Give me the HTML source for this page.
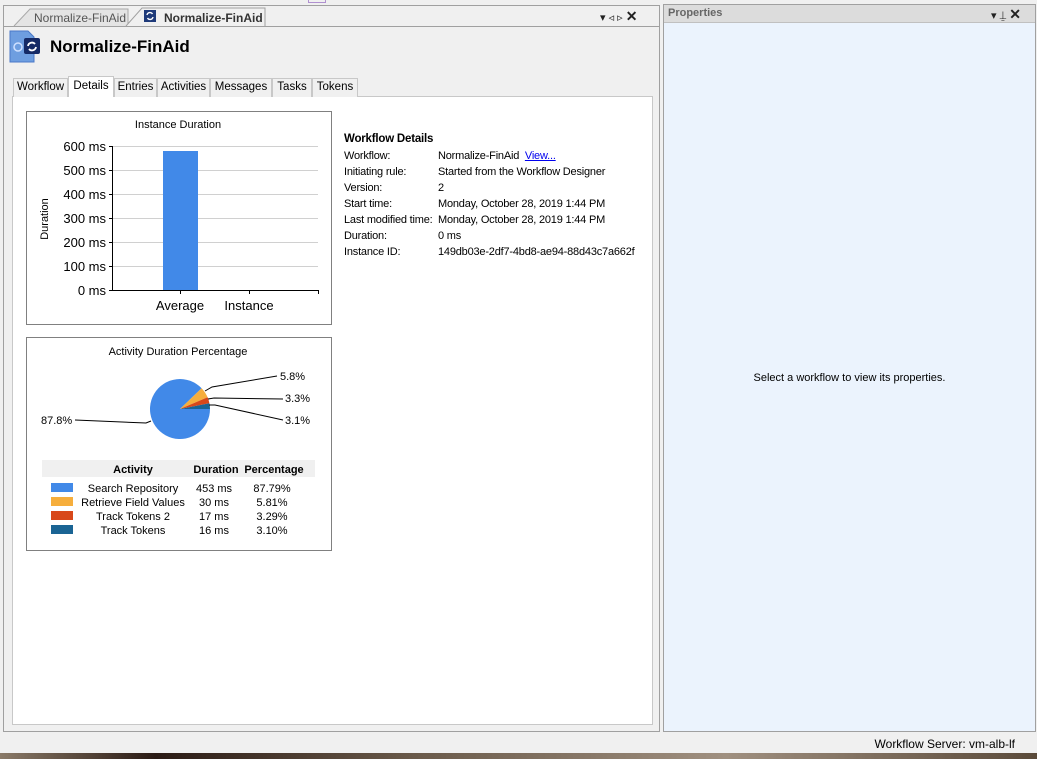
<!DOCTYPE html>
<html><head><meta charset="utf-8"><style>
*{margin:0;padding:0;box-sizing:border-box}
body{width:1037px;height:759px;overflow:hidden;background:#f0f0f0;font-family:"Liberation Sans",Arial,sans-serif;font-size:11px;color:#000;position:relative}
.a{position:absolute;white-space:nowrap}
.tab{position:absolute;top:78px;height:19px;border:1px solid #c8c8c8;border-bottom:none;background:#f0f0f0;font-size:11.5px;text-align:center;line-height:17px}
.lbl{position:absolute;left:344px;font-size:11px;letter-spacing:-0.2px}
.val{position:absolute;left:438px;font-size:11px;letter-spacing:-0.2px;white-space:nowrap}
</style></head><body>
<div class="a" style="left:3px;top:5px;width:657px;height:727px;border:1px solid #a0a0a0;background:#f0f0f0"></div>
<div class="a" style="left:4px;top:26px;width:655px;height:1px;background:#a0a0a0"></div>
<svg class="a" style="left:0;top:0" width="300" height="28">
<path d="M14 26 L30 9 L128 9 L128 26" fill="#e4e4e4" stroke="#a8a8a8"/>
<path d="M126 26 L142 8 L265 8 L265 26" fill="#f0f0f0" stroke="#a0a0a0"/>
<rect x="144" y="10" width="12" height="12" fill="#1e3a7a"/>
<path d="M147 15 a3 3 0 0 1 5.5 -1 M153 17 a3 3 0 0 1 -5.5 1" stroke="#fff" stroke-width="1.4" fill="none"/>
</svg>
<div class="a" style="left:34px;top:11px;font-size:12px;color:#555">Normalize-FinAid</div>
<div class="a" style="left:164px;top:11px;font-size:12px;font-weight:bold;color:#333">Normalize-FinAid</div>
<div class="a" style="left:308px;top:0;width:18px;height:3px;border:1px solid #b090d0;border-top:none"></div>
<div class="a" style="left:600px;top:8px;font-size:11px;color:#222">▾ ◃ ▹ <b style="font-size:14px">✕</b></div>
<svg class="a" style="left:8px;top:30px" width="36" height="34">
<path d="M2 1 L20 1 L26 7 L26 32 L2 32 Z" fill="#6e9ee0"/>
<path d="M2 1 L20 1 L26 7 L26 32 L2 32 Z" fill="none" stroke="#4a78c8"/>
<circle cx="10" cy="17" r="4" fill="none" stroke="#cfe0ff" stroke-width="1.5"/>
<rect x="16" y="8" width="16" height="16" rx="2" fill="#152a66"/>
<path d="M20 16 a4 4 0 0 1 7 -2 M28 17 a4 4 0 0 1 -7 2" stroke="#fff" stroke-width="1.8" fill="none"/>
</svg>
<div class="a" style="left:50px;top:37px;font-size:17px;font-weight:bold">Normalize-FinAid</div>
<div class="a" style="left:12px;top:96px;width:641px;height:629px;border:1px solid #c8c8c8;background:#fff"></div>
<div class="tab" style="left:13px;width:55px">Workflow</div>
<div class="tab" style="left:68px;width:46px;top:76px;height:21px;background:#fff;line-height:19px">Details</div>
<div class="tab" style="left:114px;width:43px">Entries</div>
<div class="tab" style="left:157px;width:53px">Activities</div>
<div class="tab" style="left:210px;width:62px">Messages</div>
<div class="tab" style="left:272px;width:40px">Tasks</div>
<div class="tab" style="left:312px;width:46px">Tokens</div>
<svg class="a" style="left:0;top:0" width="340" height="560" font-family="Liberation Sans,Arial,sans-serif">
<rect x="26.5" y="111.5" width="305" height="213" fill="#fff" stroke="#808080"/>
<text x="178" y="128" font-size="11" text-anchor="middle">Instance Duration</text>
<g stroke="#d0d0d0"><line x1="113" y1="146.5" x2="318" y2="146.5"/><line x1="113" y1="170.5" x2="318" y2="170.5"/><line x1="113" y1="194.5" x2="318" y2="194.5"/><line x1="113" y1="218.5" x2="318" y2="218.5"/><line x1="113" y1="242.5" x2="318" y2="242.5"/><line x1="113" y1="266.5" x2="318" y2="266.5"/></g>
<rect x="163" y="151" width="35" height="139" fill="#4189e8"/>
<g stroke="#000"><line x1="112.5" y1="146" x2="112.5" y2="291"/><line x1="112" y1="290.5" x2="319" y2="290.5"/><line x1="318.5" y1="290" x2="318.5" y2="294"/><line x1="180.5" y1="290" x2="180.5" y2="294"/><line x1="249.5" y1="290" x2="249.5" y2="294"/>
<line x1="109" y1="146.5" x2="112" y2="146.5"/><line x1="109" y1="170.5" x2="112" y2="170.5"/><line x1="109" y1="194.5" x2="112" y2="194.5"/><line x1="109" y1="218.5" x2="112" y2="218.5"/><line x1="109" y1="242.5" x2="112" y2="242.5"/><line x1="109" y1="266.5" x2="112" y2="266.5"/><line x1="109" y1="290.5" x2="112" y2="290.5"/></g>
<g font-size="13" text-anchor="end"><text x="106" y="151">600 ms</text><text x="106" y="175">500 ms</text><text x="106" y="199">400 ms</text><text x="106" y="223">300 ms</text><text x="106" y="247">200 ms</text><text x="106" y="271">100 ms</text><text x="106" y="295">0 ms</text></g>
<text transform="translate(48,219) rotate(-90)" font-size="11" text-anchor="middle">Duration</text>
<g font-size="13" text-anchor="middle"><text x="180" y="310">Average</text><text x="249" y="310">Instance</text></g>
<rect x="26.5" y="337.5" width="305" height="213" fill="#fff" stroke="#808080"/>
<text x="178" y="355" font-size="11" text-anchor="middle">Activity Duration Percentage</text>
<path d="M180 409 L201.6 388.2 A30 30 0 1 0 210 409 Z" fill="#4189e8"/>
<path d="M180 409 L207.6 397.3 A30 30 0 0 0 201.6 388.2 Z" fill="#f6ae3c"/>
<path d="M180 409 L209.4 403.2 A30 30 0 0 0 207.6 397.3 Z" fill="#d8481a"/>
<path d="M180 409 L210 409 A30 30 0 0 0 209.4 403.2 Z" fill="#1a6494"/>
<g stroke="#000" fill="none"><path d="M205 391 L212 387 L277 376"/><path d="M208 399 L214 398 L283 399"/><path d="M209 405 L215 405 L283 420"/><path d="M151 421 L146 423 L75 420"/></g>
<g font-size="11"><text x="280" y="380">5.8%</text><text x="285" y="402">3.3%</text><text x="285" y="424">3.1%</text><text x="41" y="424">87.8%</text></g>
<rect x="42" y="460" width="273" height="17" fill="#f0f0f0"/>
<g font-size="11" font-weight="bold" text-anchor="middle"><text x="133" y="473">Activity</text><text x="216" y="473">Duration</text><text x="274" y="473">Percentage</text></g>
<rect x="51" y="483" width="22" height="9" fill="#4189e8"/><rect x="51" y="497" width="22" height="9" fill="#f6ae3c"/><rect x="51" y="511" width="22" height="9" fill="#d8481a"/><rect x="51" y="525" width="22" height="9" fill="#1a6494"/>
<g font-size="11" text-anchor="middle">
<text x="133" y="492">Search Repository</text><text x="214" y="492">453 ms</text><text x="272" y="492">87.79%</text>
<text x="133" y="506">Retrieve Field Values</text><text x="214" y="506">30 ms</text><text x="272" y="506">5.81%</text>
<text x="133" y="520">Track Tokens 2</text><text x="214" y="520">17 ms</text><text x="272" y="520">3.29%</text>
<text x="133" y="534">Track Tokens</text><text x="214" y="534">16 ms</text><text x="272" y="534">3.10%</text></g>
</svg>
<div class="lbl" style="top:133px;font-weight:bold;font-size:11.5px">Workflow Details</div>
<div class="lbl" style="top:150px">Workflow:</div><div class="val" style="top:150px">Normalize-FinAid &nbsp;<span style="color:#0000ee;text-decoration:underline">View...</span></div>
<div class="lbl" style="top:166px">Initiating rule:</div><div class="val" style="top:166px">Started from the Workflow Designer</div>
<div class="lbl" style="top:182px">Version:</div><div class="val" style="top:182px">2</div>
<div class="lbl" style="top:198px">Start time:</div><div class="val" style="top:198px">Monday, October 28, 2019 1:44 PM</div>
<div class="lbl" style="top:214px">Last modified time:</div><div class="val" style="top:214px">Monday, October 28, 2019 1:44 PM</div>
<div class="lbl" style="top:230px">Duration:</div><div class="val" style="top:230px">0 ms</div>
<div class="lbl" style="top:246px">Instance ID:</div><div class="val" style="top:246px">149db03e-2df7-4bd8-ae94-88d43c7a662f</div>
<div class="a" style="left:663px;top:4px;width:373px;height:728px;border:1px solid #a0a0a0;background:#ebf3fd"></div>
<div class="a" style="left:664px;top:5px;width:371px;height:18px;background:#dcdcdc;border-bottom:1px solid #c0c0c0"></div>
<div class="a" style="left:668px;top:7px;font-size:11px;font-weight:bold;color:#666">Properties</div>
<div class="a" style="left:991px;top:6px;font-size:11px;color:#222">▾ ⍊ <b style="font-size:14px">✕</b></div>
<div class="a" style="left:663px;top:372px;width:373px;text-align:center;font-size:11px">Select a workflow to view its properties.</div>
<div class="a" style="right:22px;top:737px;font-size:12px">Workflow Server: vm-alb-lf</div>
<div class="a" style="left:0;top:753px;width:1037px;height:6px;background:linear-gradient(90deg,#8a7a68,#2a1a14 15%,#6a5a4a 40%,#a09080 70%,#5a4a3a)"></div>
</body></html>
